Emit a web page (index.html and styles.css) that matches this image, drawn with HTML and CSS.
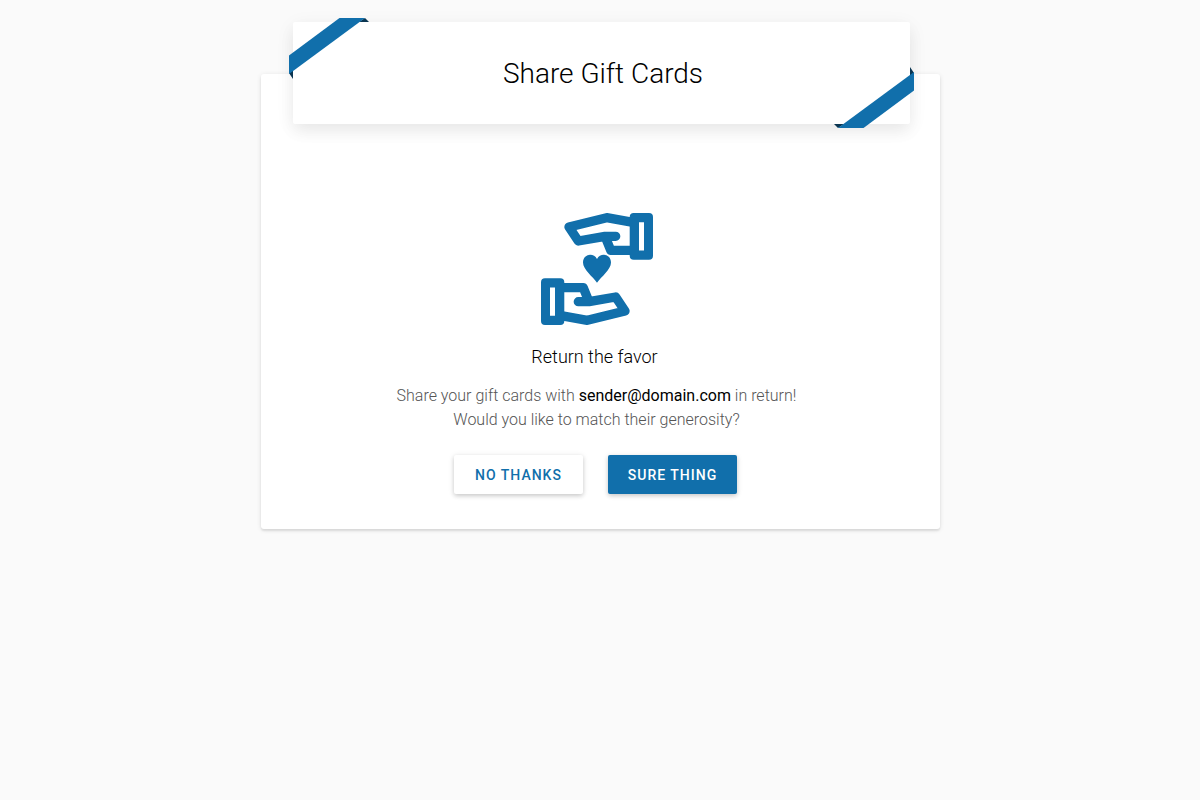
FILE: index.html
```html
<!DOCTYPE html>
<html lang="en">
<head>
    <meta charset="UTF-8">
    <meta name="viewport" content="width=device-width, initial-scale=1.0">
    <title>Share Gift Cards</title>
    <link rel="stylesheet" href="styles.css">
</head>
<body>
    <main class="card">
        <header class="card-header">
            <svg class="ribbon ribbon-top" viewBox="0 0 80 61" aria-hidden="true">
                <path class="ribbon-fold" d="M76 0L80 4H70ZM0 55L4 61V52Z"/>
                <path class="ribbon-band" d="M0 37.5L50.5 0H76L0 56Z"/>
            </svg>
            <h1>Share Gift Cards</h1>
            <svg class="ribbon ribbon-bottom" viewBox="0 0 80 61" aria-hidden="true">
                <path class="ribbon-fold" d="M76 0L80 4H70ZM0 55L4 61V52Z"/>
                <path class="ribbon-band" d="M0 37.5L50.5 0H76L0 56Z"/>
            </svg>
        </header>
        <section class="card-content">
            <svg class="hands" viewBox="0 0 112 112" aria-hidden="true">
                <defs>
                    <g id="hand">
                        <path class="hand-line" d="M92 9.3L65.7 4.7L28 14L37.3 28L64 23.3H74.7M64 23.3L69.7 37.3H92"/>
                        <path class="hand-cuff" fill-rule="evenodd" d="M92.7 0H108A4 4 0 0 1 112 4V42.7A4 4 0 0 1 108 46.7H92.7A4 4 0 0 1 88.7 42.7V4A4 4 0 0 1 92.7 0ZM98 9.3V37.5H103V9.3Z"/>
                    </g>
                </defs>
                <use href="#hand"/>
                <use href="#hand" transform="rotate(180 56 56)"/>
                <path class="hand-cuff" d="M56 69.7C52 64 42 56.5 42 49.5C42 41 52.5 39 56 46C59.5 39 70 41 70 49.5C70 56.5 60 64 56 69.7Z"/>
            </svg>
            <h2>Return the favor</h2>
            <p>Share your gift cards with <strong>sender@domain.com</strong> in return!<br>Would you like to match their generosity?</p>
            <div class="actions">
                <button type="button" class="btn">No thanks</button>
                <button type="button" class="btn btn-primary">Sure thing</button>
            </div>
        </section>
    </main>
</body>
</html>
```
FILE: styles.css
```css
* {
    box-sizing: border-box;
}
body {
    margin: 0;
    padding: 74px 20px 40px;
    background-color: #fafafa;
    font-family: Roboto, sans-serif;
    font-weight: 300;
    color: #000;
}
.card {
    max-width: 679px;
    margin: 0 auto;
    padding: 0 30px 35px 32px;
    background-color: #fff;
    border-radius: 3px;
    box-shadow: 0 2px 2px rgba(0,0,0,0.08), 0 1px 5px rgba(0,0,0,0.1);
}
.card-header {
    position: relative;
    top: -52px;
    margin-bottom: -52px;
    padding: 33px 20px 31px 24px;
    background-color: #fff;
    border-radius: 2px;
    box-shadow: 0 8px 16px rgba(0,0,0,0.05), 0 4px 20px rgba(0,0,0,0.06);
    text-align: center;
}
h1 {
    margin: 0;
    font-size: 28px;
    line-height: 38px;
    font-weight: 300;
}
.ribbon {
    position: absolute;
    width: 80px;
    height: 61px;
}
.ribbon-top {
    top: -4px;
    left: -4px;
}
.ribbon-bottom {
    right: -4px;
    bottom: -4px;
    transform: rotate(180deg);
}
.ribbon-band {
    fill: #116fab;
}
.ribbon-fold {
    fill: #0a3551;
}
.card-content {
    display: flex;
    flex-direction: column;
    align-items: center;
    padding: 89px 9px 0 0;
    text-align: center;
}
.hands {
    width: 112px;
    height: 112px;
}
.hand-line {
    fill: none;
    stroke: #116fab;
    stroke-width: 9.3;
    stroke-linecap: round;
    stroke-linejoin: round;
}
.hand-cuff {
    fill: #116fab;
}
h2 {
    margin: 20px 0 15px;
    padding-right: 4px;
    font-size: 18px;
    line-height: 24px;
    font-weight: 300;
}
p {
    margin: 0;
    font-size: 16px;
    line-height: 24px;
    color: #555;
}
strong {
    font-weight: 400;
    color: #000;
}
.actions {
    display: flex;
    gap: 25px;
    margin-top: 23px;
    padding-right: 2px;
}
.btn {
    min-width: 129px;
    height: 39px;
    padding: 0 16px;
    border: none;
    border-radius: 2px;
    background-color: #fff;
    color: #116fab;
    font-family: inherit;
    font-size: 14px;
    font-weight: 500;
    letter-spacing: 1px;
    text-transform: uppercase;
    box-shadow: 0 2px 4px rgba(0,0,0,0.14), 0 1px 6px rgba(0,0,0,0.1);
    cursor: pointer;
}
.btn-primary {
    background-color: #116fab;
    color: #fff;
}
```
